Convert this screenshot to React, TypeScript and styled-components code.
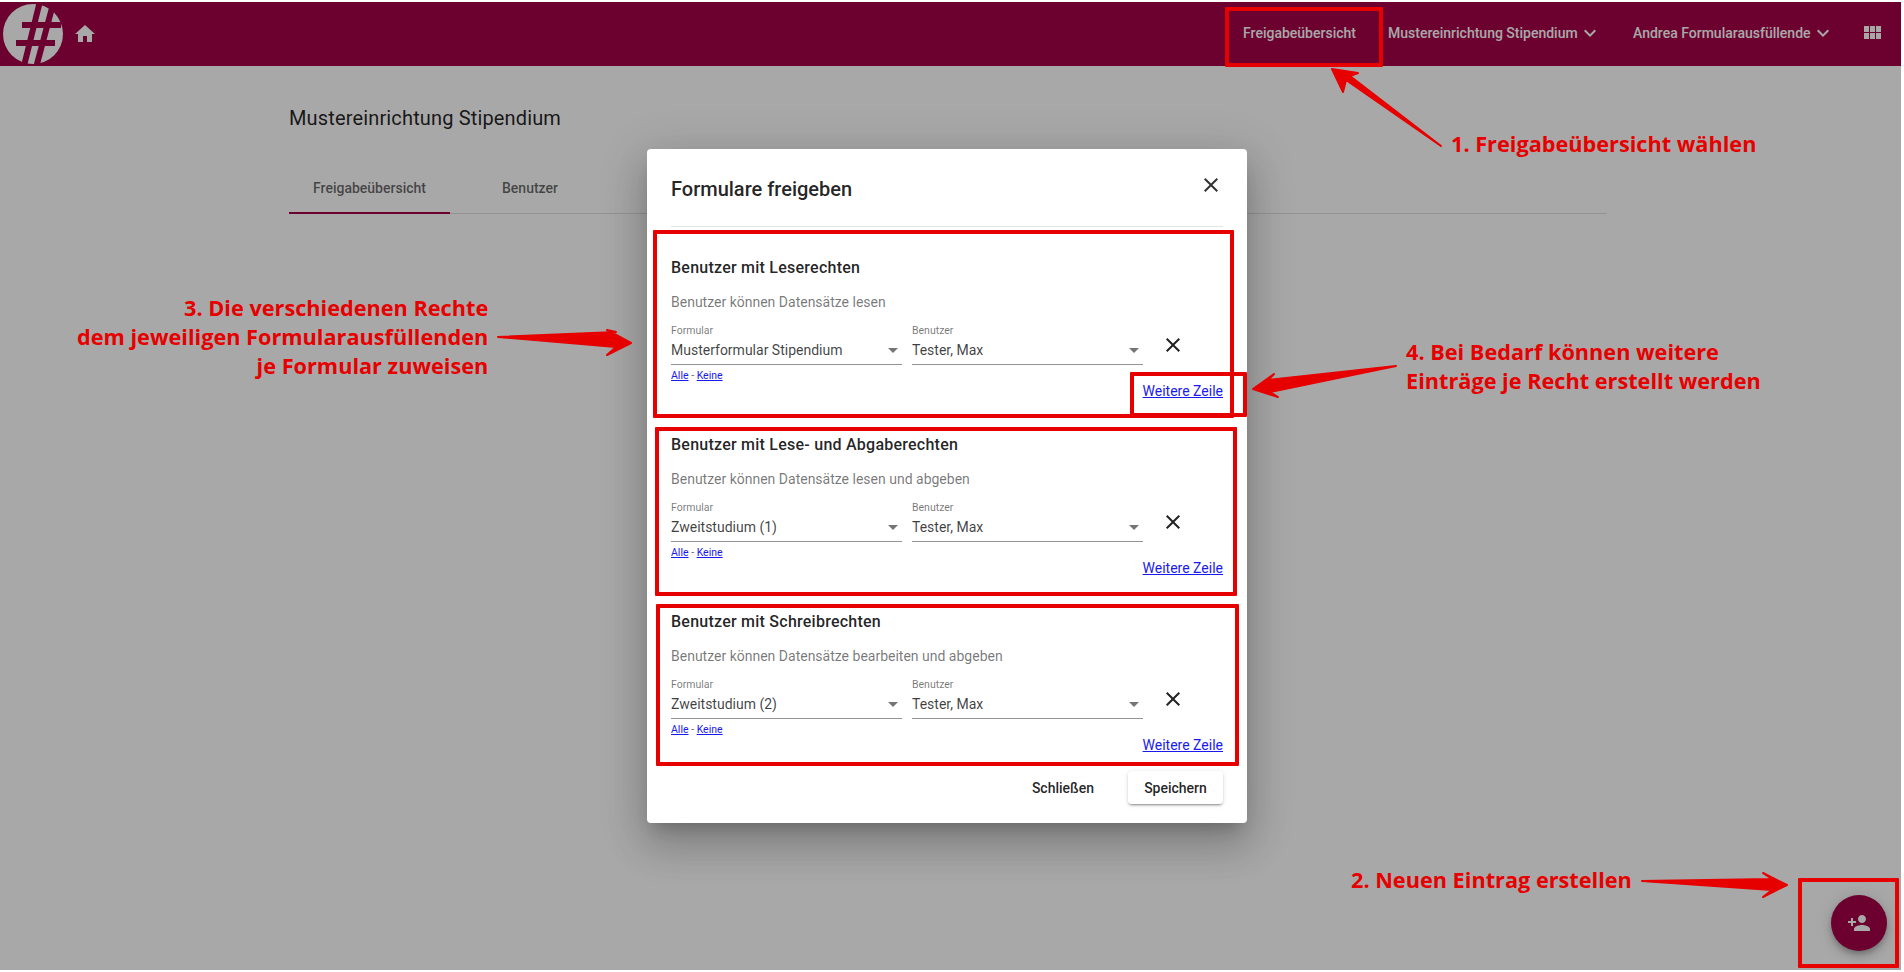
import React from "react";
import styled, { createGlobalStyle } from "styled-components";

const Global = createGlobalStyle`
  html, body { margin: 0; padding: 0; background: #fff; overflow: hidden; }
  body { font-family: Roboto, "Liberation Sans", sans-serif; }
  * { box-sizing: border-box; }
`;

const Screen = styled.div`
  position: relative;
  width: 1901px;
  height: 968px;
  margin-top: 2px;
  background: #fff;
  overflow: hidden;
`;
const Header = styled.header`
  height: 64px;
  background: #a40047;
  display: flex;
  align-items: flex-start;
  color: #fff;
`;
const Brand = styled.div`
  display: flex;
  align-items: center;
  width: 100px;
  padding: 2px 0 0 3px;
`;
const HomeBtn = styled.div`
  display: flex;
  margin: 0 0 0 10px;
`;
const Nav = styled.nav`
  margin-left: auto;
  display: flex;
  align-items: center;
  height: 62px;
`;
const NavItem = styled.div<{ $w: number; $pad?: number; $center?: boolean }>`
  display: flex;
  align-items: center;
  justify-content: ${(p) => (p.$center ? "center" : "flex-start")};
  width: ${(p) => p.$w}px;
  padding-left: ${(p) => p.$pad ?? 0}px;
  padding-right: ${(p) => (p.$center ? 8 : 0)}px;
  font-size: 14px;
  font-weight: 500;
  white-space: nowrap;
`;
const NavIcon = styled.div`
  display: flex;
  margin: 0 17px 0 0;
`;
const Main = styled.main`
  width: 1318px;
  margin-left: 289px;
`;
const PageTitle = styled.h1`
  margin: 40px 0 0;
  font-size: 20px;
  line-height: 24px;
  font-weight: 400;
  letter-spacing: 0.15px;
  color: rgba(0, 0, 0, 0.87);
`;
const Tabs = styled.div`
  display: flex;
  margin-top: 34px;
  border-bottom: 1px solid rgba(0, 0, 0, 0.12);
  height: 50px;
`;
const Tab = styled.div<{ $active?: boolean; $w: number }>`
  width: ${(p) => p.$w}px;
  height: 50px;
  display: flex;
  align-items: center;
  justify-content: center;
  font-size: 14px;
  font-weight: 500;
  color: rgba(0, 0, 0, 0.6);
  border-bottom: 2px solid ${(p) => (p.$active ? "#a40047" : "transparent")};
`;
const Fab = styled.div`
  position: absolute;
  left: 1831px;
  top: 893px;
  width: 56px;
  height: 56px;
  border-radius: 50%;
  background: #a40047;
  display: flex;
  align-items: center;
  justify-content: center;
  color: #fff;
  box-shadow: 0 3px 5px -1px rgba(0,0,0,.2), 0 6px 10px 0 rgba(0,0,0,.14), 0 1px 18px 0 rgba(0,0,0,.12);
`;
const Backdrop = styled.div`
  position: absolute;
  inset: 0;
  background: rgba(0, 0, 0, 0.34);
`;
const Modal = styled.section`
  position: absolute;
  left: 647px;
  top: 147px;
  width: 600px;
  height: 674px;
  background: #fff;
  border-radius: 4px;
  padding: 0 24px;
  box-shadow: 0 11px 15px -7px rgba(0,0,0,.2), 0 24px 38px 3px rgba(0,0,0,.14), 0 9px 46px 8px rgba(0,0,0,.12);
`;
const ModalHead = styled.div`
  height: 78px;
  display: flex;
  justify-content: space-between;
  align-items: flex-start;
  border-bottom: 1px solid #e4e4e4;
`;
const ModalTitle = styled.h2`
  margin: 26px 0 0;
  font-size: 20px;
  line-height: 28px;
  font-weight: 500;
  color: rgba(0, 0, 0, 0.87);
`;
const CloseIcon = styled.div`
  display: flex;
  margin: 24px 0 0 0;
  color: #333;
`;
const Section = styled.div`
  height: 177px;
  padding-top: 31px;
  display: flex;
  flex-direction: column;
`;
const SectionTitle = styled.h3`
  margin: 0;
  font-size: 16px;
  line-height: 20px;
  font-weight: 500;
  letter-spacing: 0.24px;
  color: rgba(0, 0, 0, 0.87);
`;
const Hint = styled.p`
  margin: 14px 0 0;
  font-size: 14px;
  line-height: 20px;
  color: rgba(0, 0, 0, 0.54);
`;
const FieldRow = styled.div`
  display: flex;
  gap: 10px;
  margin-top: 9px;
`;
const Field = styled.div`
  width: 231px;
  height: 44px;
  border-bottom: 1px solid rgba(0, 0, 0, 0.42);
  display: flex;
  flex-direction: column;
  padding-top: 4px;
`;
const FieldLabel = styled.label`
  font-size: 10.5px;
  line-height: 12px;
  color: rgba(0, 0, 0, 0.54);
`;
const FieldValue = styled.div`
  display: flex;
  align-items: center;
  justify-content: space-between;
  font-size: 14px;
  line-height: 20px;
  margin-top: 3px;
  color: rgba(0, 0, 0, 0.75);
`;
const Caret = styled.span`
  width: 0;
  height: 0;
  margin-right: 4px;
  border-left: 5px solid transparent;
  border-right: 5px solid transparent;
  border-top: 5px solid rgba(0, 0, 0, 0.54);
`;
const RowRemove = styled.div`
  display: flex;
  margin: 12px 0 0 8px;
  color: #222;
`;
const MiniLinks = styled.div`
  margin-top: 5px;
  font-size: 10.5px;
  line-height: 12px;
  color: #666;
`;
const BlueLink = styled.a`
  color: #1a1aee;
  text-decoration: underline;
`;
const MoreLine = styled.div`
  margin: 0;
  text-align: right;
  font-size: 14px;
  line-height: 18px;
`;
const Footer = styled.div`
  display: flex;
  justify-content: flex-end;
  align-items: center;
  gap: 18px;
  margin-top: 13px;
`;
const TextBtn = styled.div`
  height: 33px;
  padding: 0 16px;
  display: flex;
  align-items: center;
  font-size: 14px;
  font-weight: 500;
  color: rgba(0, 0, 0, 0.87);
`;
const RaisedBtn = styled(TextBtn)`
  width: 95px;
  justify-content: center;
  padding: 0;
  border-radius: 4px;
  background: #fff;
  box-shadow: 0 3px 1px -2px rgba(0,0,0,.2), 0 2px 2px 0 rgba(0,0,0,.14), 0 1px 5px 0 rgba(0,0,0,.12);
`;
const Frame = styled.div<{ $x: number; $y: number; $w: number; $h: number }>`
  position: absolute;
  left: ${(p) => p.$x}px;
  top: ${(p) => p.$y}px;
  width: ${(p) => p.$w}px;
  height: ${(p) => p.$h}px;
  border: 4px solid #e60000;
  border-radius: 1px;
  pointer-events: none;
`;
const Note = styled.div<{ $x: number; $y: number; $right?: boolean }>`
  position: absolute;
  left: ${(p) => p.$x}px;
  top: ${(p) => p.$y}px;
  font-family: "Open Sans", "Liberation Sans", sans-serif;
  font-weight: 700;
  font-size: 21.7px;
  line-height: 29px;
  color: #e60000;
  white-space: nowrap;
  text-align: ${(p) => (p.$right ? "right" : "left")};
`;
const ArrowLayer = styled.svg`
  position: absolute;
  left: 0;
  top: -2px;
  width: 1904px;
  height: 972px;
  pointer-events: none;
`;

const Close = ({ size = 24 }: { size?: number }) => (
  <svg width={size} height={size} viewBox="0 0 24 24" fill="currentColor">
    <path d="M19 6.41 17.59 5 12 10.59 6.41 5 5 6.41 10.59 12 5 17.59 6.41 19 12 13.41 17.59 19 19 17.59 13.41 12z" />
  </svg>
);
const Chevron = () => (
  <svg width="24" height="24" viewBox="0 0 24 24" fill="currentColor">
    <path d="M7.41 8.59 12 13.17l4.59-4.58L18 10l-6 6-6-6z" />
  </svg>
);

const rows = [
  { title: "Benutzer mit Leserechten", hint: "Benutzer können Datensätze lesen", form: "Musterformular Stipendium" },
  { title: "Benutzer mit Lese- und Abgaberechten", hint: "Benutzer können Datensätze lesen und abgeben", form: "Zweitstudium (1)" },
  { title: "Benutzer mit Schreibrechten", hint: "Benutzer können Datensätze bearbeiten und abgeben", form: "Zweitstudium (2)" },
];

export default function App() {
  return (
    <>
      <Global />
      <Screen>
        <Header>
          <Brand>
            <svg width="60" height="60" viewBox="0 0 60 60">
              <circle cx="30" cy="30" r="30" fill="#fff" />
              <g stroke="#a40047" strokeWidth="6" fill="none">
                <path d="M36.5 -1 L21 62" />
                <path d="M49.5 2 L33.5 62" />
                <path d="M19 21 L58 21" />
                <path d="M13 39 L52 39" />
              </g>
            </svg>
            <HomeBtn>
              <svg width="24" height="24" viewBox="0 0 24 24" fill="currentColor">
                <path d="M10 20v-6h4v6h5v-8h3L12 3 2 12h3v8z" />
              </svg>
            </HomeBtn>
          </Brand>
          <Nav>
            <NavItem $w={157} $center>Freigabeübersicht</NavItem>
            <NavItem $w={251} $pad={6}>Mustereinrichtung Stipendium <Chevron /></NavItem>
            <NavItem $w={227}>Andrea Formularausfüllende <Chevron /></NavItem>
            <NavIcon>
              <svg width="24" height="24" viewBox="0 0 24 24" fill="currentColor">
                <path d="M4 11h5V5H4v6zm0 7h5v-6H4v6zm6 0h5v-6h-5v6zm6 0h5v-6h-5v6zm-6-7h5V5h-5v6zm6-6v6h5V5h-5z" />
              </svg>
            </NavIcon>
          </Nav>
        </Header>
        <Main>
          <PageTitle>Mustereinrichtung Stipendium</PageTitle>
          <Tabs>
            <Tab $active $w={161}>Freigabeübersicht</Tab>
            <Tab $w={160}>Benutzer</Tab>
          </Tabs>
        </Main>
        <Fab>
          <svg width="24" height="24" viewBox="0 0 24 24" fill="currentColor">
            <path d="M15 12c2.21 0 4-1.79 4-4s-1.79-4-4-4-4 1.79-4 4 1.79 4 4 4zm-9-2V7H4v3H1v2h3v3h2v-3h3v-2H6zm9 4c-2.67 0-8 1.34-8 4v2h16v-2c0-2.66-5.33-4-8-4z" />
          </svg>
        </Fab>
        <Backdrop />
        <Modal>
          <ModalHead>
            <ModalTitle>Formulare freigeben</ModalTitle>
            <CloseIcon><Close /></CloseIcon>
          </ModalHead>
          {rows.map((r) => (
            <Section key={r.title}>
              <SectionTitle>{r.title}</SectionTitle>
              <Hint>{r.hint}</Hint>
              <FieldRow>
                <Field>
                  <FieldLabel>Formular</FieldLabel>
                  <FieldValue>{r.form}<Caret /></FieldValue>
                </Field>
                <Field>
                  <FieldLabel>Benutzer</FieldLabel>
                  <FieldValue>Tester, Max<Caret /></FieldValue>
                </Field>
                <RowRemove><Close /></RowRemove>
              </FieldRow>
              <MiniLinks><BlueLink>Alle</BlueLink> - <BlueLink>Keine</BlueLink></MiniLinks>
              <MoreLine><BlueLink>Weitere Zeile</BlueLink></MoreLine>
            </Section>
          ))}
          <Footer>
            <TextBtn>Schließen</TextBtn>
            <RaisedBtn>Speichern</RaisedBtn>
          </Footer>
        </Modal>

        <Frame $x={1225} $y={5} $w={158} $h={60} />
        <Frame $x={1798} $y={876} $w={101} $h={90} />
        <Frame $x={653} $y={228} $w={581} $h={188} />
        <Frame $x={1130} $y={370} $w={117} $h={45} />
        <Frame $x={655} $y={425} $w={582} $h={169} />
        <Frame $x={656} $y={602} $w={583} $h={162} />

        <ArrowLayer viewBox="0 0 1904 972">
          <g fill="#e60000" stroke="#e60000" strokeWidth="2" strokeLinejoin="round">
            <polygon points="1441,146 1346,80 1343,92 1332,69 1358,73 1350,76" />
            <polygon points="1642,881 1772,879 1763,873 1787,885 1763,897 1772,890" />
            <polygon points="498,337 616,332 607,330 631,343 607,355 616,347" />
            <polygon points="1396,366 1268,380 1274,374 1253,389 1278,397 1270,392" />
          </g>
        </ArrowLayer>
        <Note $x={1451} $y={127}>1. Freigabeübersicht wählen</Note>
        <Note $x={1351} $y={863}>2. Neuen Eintrag erstellen</Note>
        <Note $x={77} $y={291} $right>
          3. Die verschiedenen Rechte<br />dem jeweiligen Formularausfüllenden<br />je Formular zuweisen
        </Note>
        <Note $x={1406} $y={335}>
          4. Bei Bedarf können weitere<br />Einträge je Recht erstellt werden
        </Note>
      </Screen>
    </>
  );
}
